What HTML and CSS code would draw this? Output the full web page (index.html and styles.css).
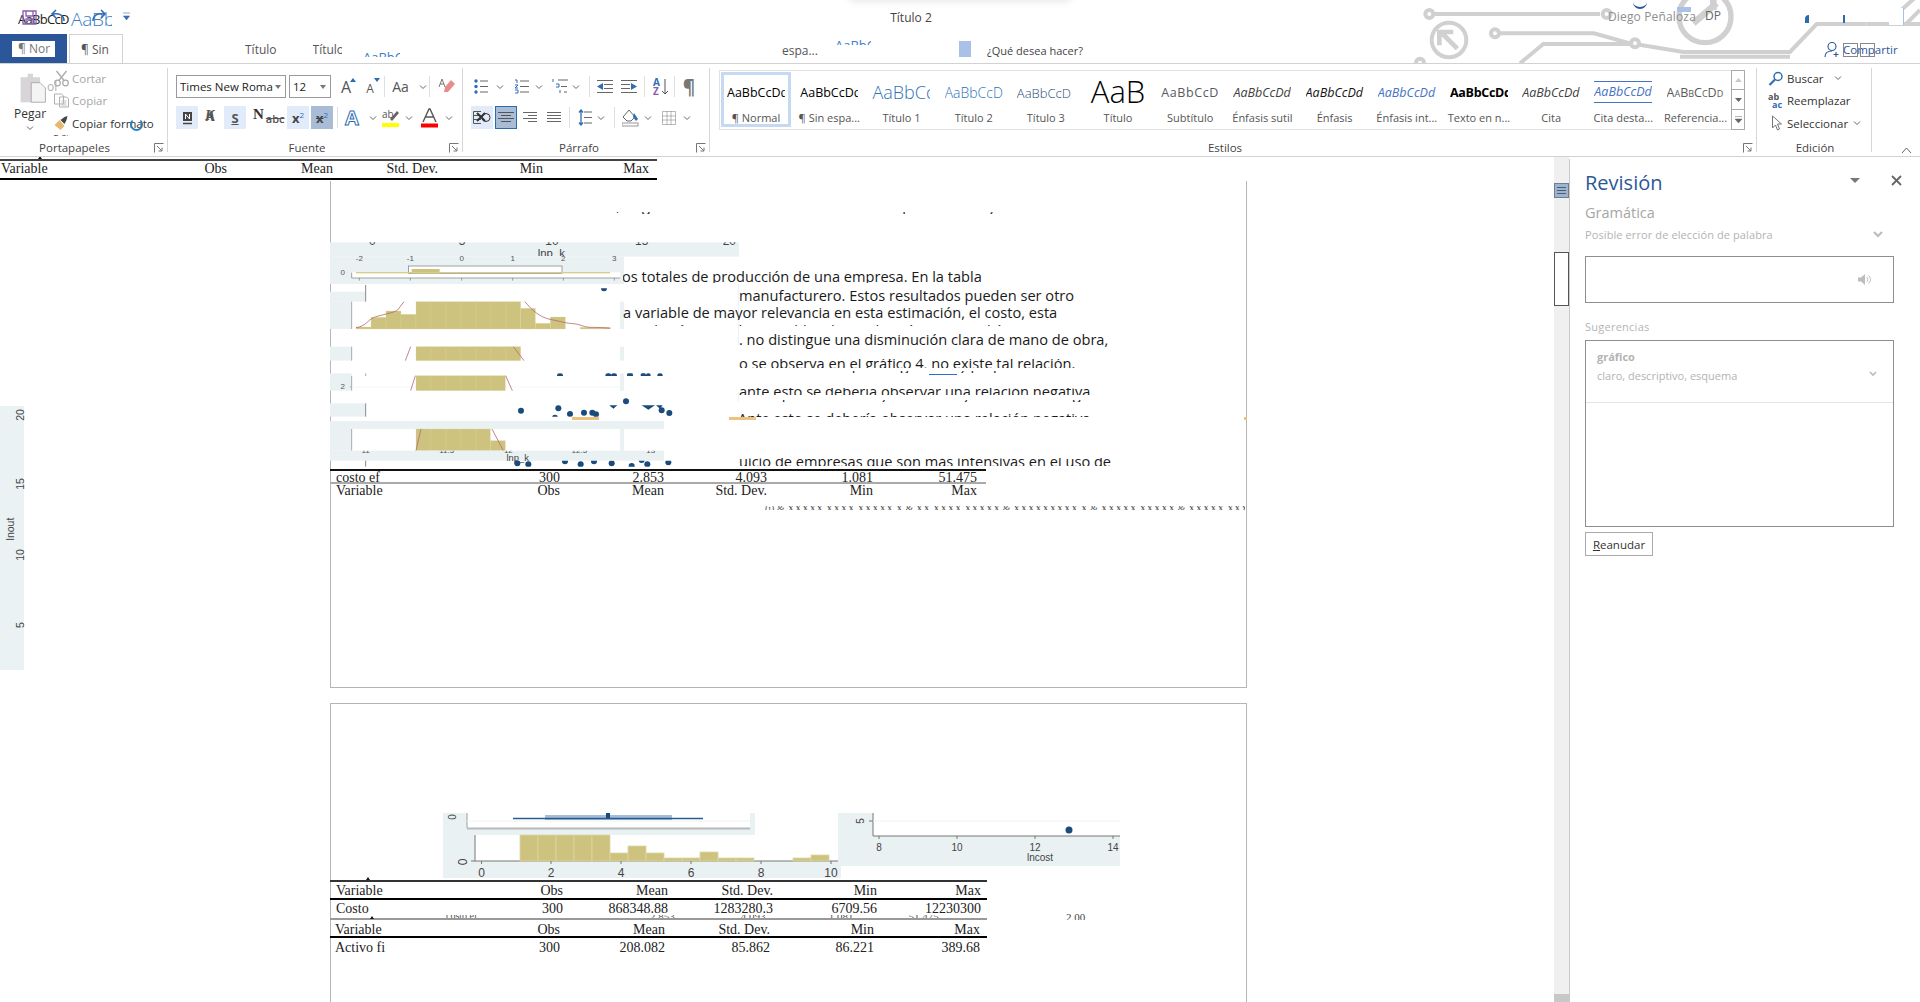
FILE: index.html
```html
<!DOCTYPE html>
<html lang="es">
<head>
<meta charset="utf-8">
<title>Word</title>
<link rel="stylesheet" href="styles.css">
</head>
<body>
<svg class="defs" width="0" height="0">
  <symbol id="chev" viewBox="0 0 8 6"><path d="M1 1.5l3 3 3-3" fill="none" stroke="#666" stroke-width="1"/></symbol>
  <symbol id="launch" viewBox="0 0 10 10"><path d="M.5 9.5V.5h9M3 3l5 5M8 4.5V8H4.5" fill="none" stroke="#777" stroke-width="1"/></symbol>
</svg>
<div class="app">
  <header class="head">
    <svg class="art" width="520" height="64" viewBox="0 0 1560 192">
      <g fill="none" stroke="#d0d0d0" stroke-width="12">
        <path d="M98 42H600"/><circle cx="88" cy="42" r="12"/><circle cx="620" cy="42" r="12"/>
        <circle cx="147" cy="120" r="52"/><path d="M128 102l44 44M118 136V96H160" stroke-width="14"/>
        <path d="M298 100H582L690 130"/><circle cx="285" cy="100" r="12"/><circle cx="705" cy="130" r="12"/>
        <path d="M360 190L430 132H690M718 134L850 156H1170L1250 72H1400"/>
        <circle cx="60" cy="188" r="12"/>
        <circle cx="915" cy="50" r="78" stroke-width="16"/><path d="M880 70L950 10M940 30V-10" stroke-width="20"/>
        <path d="M1400 72H1560M1470 60L1560 -20M1520 70L1560 30M840 170H1170"/>
      </g>
    </svg>
    <div class="peek"></div>
    <div class="titlebar">
      <div class="qat">
        <span class="ghost-a">AaBbCcD</span><span class="ghost-b">AaBbC</span>
        <svg class="save" width="15" height="15" viewBox="0 0 15 15"><path d="M1 1h13v13H1zM4 1v5h7V1M4 14V9h7v5" fill="none" stroke="#8a5cb0" stroke-width="1.3"/></svg>
        <svg class="undo" width="16" height="14" viewBox="0 0 16 14"><path d="M14 12C14 6 9 4 3 5M6 1L2 5l4 4" fill="none" stroke="#2f6db5" stroke-width="1.6"/></svg>
        <svg class="redo" width="16" height="14" viewBox="0 0 16 14"><path d="M2 12C2 6 7 4 13 5M10 1l4 4-4 4" fill="none" stroke="#2f6db5" stroke-width="1.6"/></svg>
        <svg class="more" width="7" height="9" viewBox="0 0 7 9"><path d="M0 1h7M.5 4h6L3.500 8z" fill="#3a6fb0" stroke="#3a6fb0" stroke-width=".6"/></svg>
      </div>
      <div class="doc-title">Título 2</div>
      <div class="account">
        <span class="acc-arc"></span><span class="acc-bar"></span>
        <span class="acc-name">Diego Peñaloza</span>
        <span class="acc-initials">DP</span>
        <span class="acc-frag a"></span><span class="acc-frag b"></span>
        <span class="acc-white"></span>
      </div>
    </div>
    <nav class="tabs">
      <div class="tab-blue"><span class="tab-white">¶ Nor</span></div>
      <div class="tab-active"><span class="tab-clip">¶ Sin espa</span></div>
      <span class="tabtext t1">Título</span>
      <span class="tabtext t2">Título</span>
      <span class="tabfrag f1"><span>AaBbCcD</span></span>
      <span class="tabtext t3">espa...</span>
      <span class="tabfrag f2"><span>AaBbCcD</span></span>
      <span class="blue-box"></span>
      <span class="tabtext t4">¿Qué desea hacer?</span>
      <div class="share">
        <svg width="18" height="17" viewBox="0 0 18 17"><path d="M9 1.500a4 4 0 0 1 0 8 4 4 0 0 1 0-8zM2 16c0-4 3-6 7-6M13 11v5M10.500 13.500h5" fill="none" stroke="#2b579a" stroke-width="1.100"/></svg>
        <span class="share-text">Compartir<i class="sq s1"></i><i class="sq s2"></i></span>
      </div>
    </nav>
  </header>

  <section class="ribbon">
    <div class="group g-clip">
      <div class="g-body clip-body">
        <div class="paste">
          <span class="ghost-ol">ol</span>
          <svg class="paste-ic" width="34" height="32" viewBox="0 0 34 36"><path d="M3 6h8V2h6v4h8v28H3z" fill="#d8d4d8"/><path d="M15 12h10l6 6v16H15z" fill="#f4f4f4" stroke="#a8a8a8"/></svg>
          <span class="paste-label">Pegar</span>
          <svg class="chev" width="8" height="6"><use href="#chev"/></svg>
        </div>
        <div class="cmds">
          <div class="cmd off"><svg width="16" height="17" viewBox="0 0 16 17"><path d="M3 1l8 10M13 1L5 11" stroke="#b0b0b0" stroke-width="1.500" fill="none"/><circle cx="4" cy="13" r="2.800" fill="none" stroke="#a8a8a8" stroke-width="1.200"/><circle cx="12" cy="13" r="2.800" fill="none" stroke="#a8a8a8" stroke-width="1.200"/></svg><span>Cortar</span></div>
          <div class="cmd off"><svg width="16" height="15" viewBox="0 0 16 15"><path d="M1 1h7l2 2v8H1zM6 4h7l2 2v8H6z" fill="#fff" stroke="#b0b0b0"/><path d="M8 8h5M8 10h5M8 12h5" stroke="#c0c0c0"/></svg><span>Copiar</span></div>
          <div class="cmd"><svg width="16" height="16" viewBox="0 0 16 16"><path d="M1 10l5-5 5 6-4 4z" fill="#e6b96e"/><path d="M7 5l4-3 3-1-1 4-2 4z" fill="#444"/></svg><span>Copiar formato</span><i class="ring"></i></div>
          <div class="frag sin"><span>¶ Sin</span></div>
        </div>
      </div>
      <div class="g-label">Portapapeles<svg class="launch" width="10" height="10"><use href="#launch"/></svg></div>
    </div>

    <div class="group g-font">
      <div class="g-body rows">
        <div class="row">
          <div class="combo w110"><span>Times New Roma</span><svg width="8" height="6"><path d="M1 1h6L4 5z" fill="#777"/></svg></div>
          <div class="combo w42"><span>12</span><svg width="8" height="6"><path d="M1 1h6L4 5z" fill="#777"/></svg></div>
          <i class="w3"></i>
          <div class="b w24"><span class="big-a">A</span><svg class="up" width="6" height="4"><path d="M0 4l3-4 3 4z" fill="#2b6cb0"/></svg></div>
          <div class="b w24"><span class="small-a">A</span><svg class="up" width="6" height="4"><path d="M0 0l3 4 3-4z" fill="#2b6cb0"/></svg></div>
          <i class="w2"></i><i class="sep"></i>
          <div class="b w31"><span class="aa">Aa</span></div>
          <div class="b w13"><svg width="8" height="6"><use href="#chev"/></svg></div>
          <i class="sep"></i>
          <div class="b w33"><svg width="18" height="18" viewBox="0 0 18 18"><path d="M7 9l6-7 4 4-7 8H6z" fill="#e88b8b"/><path d="M4 1L1 9M4 1l3 8M2 6h4" stroke="#777" fill="none"/></svg></div>
        </div>
        <div class="row">
          <div class="b w22 on"><svg width="11" height="14" viewBox="0 0 11 14"><path d="M1 1h9v9H1z" fill="#444"/><path d="M3.500 8V3l4 5V3" stroke="#fff" fill="none"/><path d="M1 12.500h9" stroke="#444" stroke-width="1.500"/></svg></div>
          <div class="b w26 k"><span class="k-a">K</span><span class="k-b">A</span></div>
          <div class="b w22 on"><span class="s-u">S</span></div>
          <div class="b w41 nabc"><span class="n">N</span><span class="abc">abc</span></div>
          <div class="b w22 on"><span class="xs">x</span><span class="sup">2</span></div>
          <i class="w2"></i>
          <div class="b w22 sel-lite"><span class="xs strike">x</span><span class="sup">2</span></div>
          <i class="w4"></i><i class="sep"></i>
          <div class="b w28"><span class="a-out">A</span></div>
          <div class="b w14"><svg width="8" height="6"><use href="#chev"/></svg></div>
          <div class="b w22"><svg width="18" height="20" viewBox="0 0 18 20"><text x="0" y="10" class="hl-t">ab</text><path d="M8 11L15 3l2 2-7 8z" fill="#666"/><rect y="15" width="17" height="4" fill="#ffff00"/></svg></div>
          <div class="b w14"><svg width="8" height="6"><use href="#chev"/></svg></div>
          <div class="b w26"><svg width="17" height="20" viewBox="0 0 17 20"><path d="M2 14L8 1h1l6 13M4.500 9h8" fill="none" stroke="#555" stroke-width="1.400"/><rect y="15.500" width="17" height="4" fill="#f00"/></svg></div>
          <div class="b w13"><svg width="8" height="6"><use href="#chev"/></svg></div>
        </div>
      </div>
      <div class="g-label">Fuente<svg class="launch" width="10" height="10"><use href="#launch"/></svg></div>
    </div>

    <div class="group g-para">
      <div class="g-body rows">
        <div class="row">
          <div class="b w24"><svg width="14" height="15" viewBox="0 0 14 15"><g stroke="#666"><path d="M6 2h8M6 7.500h8M6 13h8"/></g><g fill="#2f6db5"><circle cx="2" cy="2" r="1.700"/><circle cx="2" cy="7.500" r="1.700"/><circle cx="2" cy="13" r="1.700"/></g></svg></div>
          <div class="b w14"><svg width="8" height="6"><use href="#chev"/></svg></div><i class="w2"></i>
          <div class="b w24"><svg width="15" height="15" viewBox="0 0 15 15"><g stroke="#666"><path d="M6 2h9M6 7.500h9M6 13h9"/></g><g stroke="#2f6db5" fill="none"><path d="M1 1h2v3M1 6h3L1 9h3M1 11h3v3H1"/></g></svg></div>
          <div class="b w12"><svg width="8" height="6"><use href="#chev"/></svg></div><i class="w3"></i>
          <div class="b w24"><svg width="17" height="15" viewBox="0 0 17 15"><g stroke="#666"><path d="M6 1h10M9 7.500h6M12 13h3"/></g><g stroke="#2f6db5" fill="none"><path d="M1 0v3M4 5h3v3H4M8 11v3"/></g></svg></div>
          <div class="b w8"><svg width="8" height="6"><use href="#chev"/></svg></div><i class="w9"></i><i class="sep"></i><i class="w3"></i>
          <div class="b w24"><svg width="16" height="13" viewBox="0 0 16 13"><g stroke="#666"><path d="M0 .500h16M7 4.500h9M7 8.500h9M0 12.500h16"/></g><path d="M0 6.500L6 3v7z" fill="#2f6db5"/></svg></div>
          <div class="b w24"><svg width="16" height="13" viewBox="0 0 16 13"><g stroke="#666"><path d="M0 .500h16M0 4.500h9M0 8.500h9M0 12.500h16"/></g><path d="M16 6.500L10 3v7z" fill="#2f6db5"/></svg></div>
          <i class="w3"></i><i class="sep"></i><i class="w3"></i>
          <div class="b w24"><svg width="15" height="18" viewBox="0 0 15 18"><text x="0" y="8" class="az b1">A</text><text x="0" y="17" class="az b2">Z</text><path d="M12 1v15M9 13l3 3 3-3" fill="none" stroke="#555"/></svg></div>
          <i class="w2"></i><i class="sep"></i><i class="w2"></i>
          <div class="b w24"><span class="pilcrow">¶</span></div>
        </div>
        <div class="row">
          <i class="w2"></i>
          <div class="b w22 on"><svg width="18" height="13" viewBox="0 0 18 13"><path d="M.5.500H8M.5 4.500H8M.5 8.500H8M.5 12.500H8M.5.500v12" stroke="#555" fill="none"/><path d="M4 2l8 8M12 2l-8 8" stroke="#333" stroke-width="2"/><circle cx="13" cy="6.500" r="4" fill="none" stroke="#333"/></svg></div>
          <i class="w2"></i>
          <div class="b w22 sel"><svg width="16" height="11" viewBox="0 0 16 11"><path d="M0 .500h16M3 3.500h10M0 6.500h16M3 9.500h10" stroke="#555"/></svg></div>
          <i class="w2"></i>
          <div class="b w22"><svg width="14" height="11" viewBox="0 0 14 11"><path d="M0 .500h14M5 3.500h9M0 6.500h14M5 9.500h9" stroke="#666"/></svg></div>
          <i class="w2"></i>
          <div class="b w22"><svg width="14" height="11" viewBox="0 0 14 11"><path d="M0 .500h14M0 3.500h14M0 6.500h14M0 9.500h14" stroke="#666"/></svg></div>
          <i class="w4"></i><i class="sep"></i><i class="w3"></i>
          <div class="b w23"><svg width="14" height="17" viewBox="0 0 14 17"><path d="M6 3h8M6 8.500h8M6 14h8" stroke="#666"/><path d="M3 1v15M1 3.500L3 1l2 2.500M1 13.500L3 16l2-2.500" fill="none" stroke="#2f6db5" stroke-width="1.300"/></svg></div>
          <div class="b w10"><svg width="8" height="6"><use href="#chev"/></svg></div>
          <i class="w8"></i><i class="sep"></i><i class="w3"></i>
          <div class="b w24"><svg width="17" height="19" viewBox="0 0 17 19"><path d="M1 9l6-7 6 7-4 4H5z" fill="#fff" stroke="#666"/><path d="M12 5l4 6-2 2-3-4z" fill="#2f6db5"/><rect x="0" y="15" width="16" height="3" fill="#fff" stroke="#999"/></svg></div>
          <div class="b w12"><svg width="8" height="6"><use href="#chev"/></svg></div>
          <i class="w3"></i>
          <div class="b w23"><svg width="14" height="14" viewBox="0 0 14 14"><path d="M.500.500h13v13H.500zM5 .500v13M9 .500v13M.500 5h13M.500 9h13" fill="none" stroke="#777" stroke-dasharray="1 1"/></svg></div>
          <div class="b w14"><svg width="8" height="6"><use href="#chev"/></svg></div>
        </div>
      </div>
      <div class="g-label">Párrafo<svg class="launch" width="10" height="10"><use href="#launch"/></svg></div>
    </div>

    <div class="group g-styles">
      <div class="g-body">
        <div class="gallery">
          <div class="style picked"><span class="pv p-normal">AaBbCcDd</span><span class="st">¶ Normal</span></div>
          <div class="style"><span class="pv p-normal">AaBbCcDd</span><span class="st">¶ Sin espa...</span></div>
          <div class="style"><span class="pv p-h1">AaBbCc</span><span class="st">Título 1</span></div>
          <div class="style"><span class="pv p-h2">AaBbCcD</span><span class="st">Título 2</span></div>
          <div class="style"><span class="pv p-h3">AaBbCcD</span><span class="st">Título 3</span></div>
          <div class="style"><span class="pv p-title">AaB</span><span class="st">Título</span></div>
          <div class="style"><span class="pv p-sub">AaBbCcD</span><span class="st">Subtítulo</span></div>
          <div class="style"><span class="pv p-em1">AaBbCcDd</span><span class="st">Énfasis sutil</span></div>
          <div class="style"><span class="pv p-em2">AaBbCcDd</span><span class="st">Énfasis</span></div>
          <div class="style"><span class="pv p-em3">AaBbCcDd</span><span class="st">Énfasis int...</span></div>
          <div class="style"><span class="pv p-strong">AaBbCcDd</span><span class="st">Texto en n...</span></div>
          <div class="style"><span class="pv p-em1">AaBbCcDd</span><span class="st">Cita</span></div>
          <div class="style"><span class="pv p-quote">AaBbCcDd</span><span class="st">Cita desta...</span></div>
          <div class="style"><span class="pv p-ref">AaBbCcDd</span><span class="st">Referencia...</span></div>
          <div class="scroller">
            <div><svg width="7" height="4"><path d="M0 4l3.500-4L7 4z" fill="#c8c8c8"/></svg></div>
            <div><svg width="7" height="4"><path d="M0 0l3.500 4L7 0z" fill="#666"/></svg></div>
            <div><svg width="7" height="7"><path d="M0 .500h7M0 3l3.500 4L7 3z" fill="#666" stroke="#666" stroke-width=".5"/></svg></div>
          </div>
        </div>
      </div>
      <div class="g-label">Estilos<svg class="launch" width="10" height="10"><use href="#launch"/></svg></div>
    </div>

    <div class="group g-edit">
      <div class="g-body edit-body">
        <div class="cmd"><svg width="15" height="15" viewBox="0 0 15 15"><circle cx="9.500" cy="5.500" r="4" fill="none" stroke="#2f6db5" stroke-width="1.500"/><path d="M6.500 8.500L1 14" stroke="#2f6db5" stroke-width="2.200"/></svg><span>Buscar</span><svg class="trail" width="8" height="6"><use href="#chev"/></svg></div>
        <div class="cmd"><svg width="16" height="15" viewBox="0 0 16 15"><text x="0" y="7" class="abac">ab</text><text x="4" y="15" class="abac blue">ac</text></svg><span>Reemplazar</span></div>
        <div class="cmd"><svg width="15" height="16" viewBox="0 0 15 16"><path d="M4 1v12l3-3 2 5 2-1-2-5h4z" fill="#fff" stroke="#777"/></svg><span>Seleccionar</span><svg class="trail2" width="8" height="6"><use href="#chev"/></svg></div>
      </div>
      <div class="g-label">Edición</div>
    </div>
    <svg class="collapse" width="11" height="7" viewBox="0 0 11 7"><path d="M1 6l4.500-5L10 6" fill="none" stroke="#666"/></svg>
  </section>

  <main class="work">
    <div class="canvas">
      <div class="page p1"></div>
      <div class="page p2"></div>

      <div class="inout">
        <span class="iy y20">20</span><span class="iy y15">15</span><span class="iy y10">10</span><span class="iy y5">5</span><span class="iy ylab">lnout</span>
      </div>

      <svg class="chart" width="1570" height="845" viewBox="0 157 1570 845">
        <defs>
          <clipPath id="cA"><rect x="0" y="430" width="1300" height="8"/></clipPath>
          <clipPath id="cB"><rect x="0" y="503" width="1300" height="57"/></clipPath>
          <clipPath id="cC"><rect x="0" y="692" width="1300" height="18"/></clipPath>
          <clipPath id="cD"><rect x="0" y="175" width="1300" height="12"/></clipPath>
          <clipPath id="cE"><rect x="0" y="37" width="1300" height="10"/></clipPath>
          <clipPath id="cF"><rect x="0" y="40" width="1300" height="38"/></clipPath>
          <clipPath id="cG"><rect x="0" y="662" width="1300" height="10"/></clipPath>
        </defs>
        <g transform="translate(330 230) scale(.33333)">
          <rect x="0" y="37" width="1227" height="43" class="pale"/>
          <g class="tick-l" clip-path="url(#cE)">
            <text x="127" y="46">0</text><text x="396" y="46">5</text><text x="666" y="46">10</text><text x="935" y="46">15</text><text x="1198" y="46">20</text>
          </g>
          <rect x="0" y="80" width="882" height="82" class="pale"/>
          <text x="664" y="81" class="axis-big" clip-path="url(#cF)">lnp_k</text>
          <g class="tick-s"><text x="88" y="92">-2</text><text x="241" y="92">-1</text><text x="395" y="92">0</text><text x="548" y="92">1</text><text x="700" y="92">2</text><text x="853" y="92">3</text></g>
          <rect x="65" y="127" width="805" height="17" fill="#fff"/>
          <rect x="236" y="108" width="460" height="22" fill="#fff" stroke="#777" stroke-width="2"/>
          <rect x="245" y="117" width="84" height="14" fill="#cdc37f"/>
          <rect x="78" y="126" width="762" height="4" fill="#d6cc8c"/>
          <path d="M65 144H870M88 144v8M241 144v8M395 144v8M548 144v8M700 144v8M853 144v8M65 128v16" stroke="#777" stroke-width="2" fill="none"/>
          <text x="38" y="136" class="tick-s">0</text>

          <rect x="0" y="185" width="105" height="30" class="pale"/>
          <path d="M107 165V215" stroke="#888" stroke-width="3"/>
          <rect x="0" y="215" width="65" height="82" class="pale"/><rect x="870" y="215" width="12" height="82" class="pale"/>
          <path d="M65 215V297" stroke="#aaa" stroke-width="3"/>
          <g class="bars">
            <rect x="78" y="291" width="45" height="6"/><rect x="123" y="262" width="45" height="35"/><rect x="168" y="243" width="45" height="54"/><rect x="213" y="253" width="45" height="44"/>
            <rect x="258" y="215" width="45" height="82"/><rect x="303" y="215" width="45" height="82"/><rect x="348" y="215" width="45" height="82"/><rect x="393" y="215" width="45" height="82"/><rect x="438" y="215" width="45" height="82"/><rect x="483" y="215" width="45" height="82"/><rect x="528" y="215" width="44" height="82"/>
            <rect x="572" y="235" width="44" height="62"/><rect x="616" y="280" width="45" height="17"/><rect x="661" y="261" width="45" height="36"/><rect x="751" y="292" width="90" height="5"/>
          </g>
          <path d="M78 293C105 290 115 270 130 263S195 248 203 240L222 215M585 215C605 240 630 262 660 268S710 280 730 281 760 292 780 292 830 293 840 295" fill="none" stroke="#b66f72" stroke-width="2.500"/>

          <rect x="0" y="350" width="65" height="42" class="pale" /><rect x="870" y="350" width="12" height="42" class="pale"/>
          <path d="M65 350V392" stroke="#aaa" stroke-width="3"/>
          <g class="bars"><rect x="258" y="350" width="45" height="42"/><rect x="303" y="350" width="45" height="42"/><rect x="348" y="350" width="45" height="42"/><rect x="393" y="350" width="45" height="42"/><rect x="438" y="350" width="45" height="42"/><rect x="483" y="350" width="45" height="42"/><rect x="528" y="350" width="44" height="42"/></g>
          <path d="M242 350L226 392M550 350L582 392" fill="none" stroke="#b66f72" stroke-width="2.500"/>

          <rect x="0" y="430" width="65" height="52" class="pale"/><rect x="870" y="430" width="12" height="52" class="pale"/>
          <path d="M65 438V482M107 430v8M60 471h5" stroke="#999" stroke-width="2.500"/>
          <text x="38" y="476" class="tick-s">2</text>
          <path d="M65 471H870" stroke="#eef3f3" stroke-width="2"/>
          <g class="bars"><rect x="258" y="437" width="45" height="45"/><rect x="303" y="437" width="45" height="45"/><rect x="348" y="437" width="45" height="45"/><rect x="393" y="437" width="45" height="45"/><rect x="438" y="437" width="45" height="45"/><rect x="483" y="437" width="43" height="45"/></g>
          <path d="M256 437L242 482M527 437L547 482" fill="none" stroke="#b66f72" stroke-width="2.500"/>
          <g class="dot" clip-path="url(#cA)"><circle cx="690" cy="438" r="9"/><circle cx="835" cy="438" r="9"/><circle cx="852" cy="438" r="9"/><circle cx="900" cy="436" r="9"/><circle cx="940" cy="436" r="8"/><circle cx="955" cy="436" r="7"/><circle cx="990" cy="437" r="8"/></g>

          <rect x="0" y="520" width="105" height="40" class="pale"/>
          <path d="M107 520V560" stroke="#888" stroke-width="3"/>
          <g class="dot" clip-path="url(#cB)"><circle cx="573" cy="542" r="9"/><circle cx="685" cy="535" r="9"/><circle cx="720" cy="552" r="9"/><circle cx="762" cy="548" r="9"/><circle cx="787" cy="548" r="9"/><circle cx="798" cy="553" r="9"/><circle cx="888" cy="514" r="9"/><circle cx="995" cy="541" r="9"/><circle cx="1018" cy="549" r="9"/><circle cx="675" cy="563" r="9"/></g>
          <g class="dot"><path d="M838 526h24l-12 10zM935 526h40l-20 13zM978 526h20l-8 10z"/></g>

          <rect x="0" y="573" width="1002" height="24" class="pale"/>
          <rect x="0" y="597" width="65" height="65" class="pale"/><rect x="870" y="597" width="12" height="65" class="pale"/>
          <path d="M65 597V662" stroke="#aaa" stroke-width="3"/>
          <g class="bars"><rect x="258" y="597" width="45" height="65"/><rect x="303" y="597" width="45" height="65"/><rect x="348" y="597" width="45" height="65"/><rect x="393" y="597" width="45" height="65"/><rect x="438" y="597" width="43" height="65"/><rect x="481" y="632" width="45" height="30"/></g>
          <path d="M273 597L258 662M486 597L520 662" fill="none" stroke="#b66f72" stroke-width="2.500"/>
          <rect x="0" y="662" width="1002" height="30" class="pale"/>
          <text x="563" y="692" class="axis-s">lnp_k</text>
          <g class="tick-s" clip-path="url(#cG)"><text x="107" y="670">11</text><text x="350" y="670">11.5</text><text x="535" y="670">12</text><text x="748" y="670">12.5</text><text x="962" y="670">13</text></g>
          <path d="M107 692V710" stroke="#888" stroke-width="3"/>
          <g class="dot" clip-path="url(#cC)"><circle cx="562" cy="700" r="9"/><circle cx="595" cy="703" r="9"/><circle cx="705" cy="694" r="9"/><circle cx="752" cy="703" r="9"/><circle cx="792" cy="694" r="9"/><circle cx="845" cy="700" r="9"/><circle cx="905" cy="708" r="9"/><circle cx="935" cy="690" r="9"/><circle cx="952" cy="703" r="9"/><circle cx="1015" cy="697" r="9"/></g>
          <g class="dot" clip-path="url(#cD)"><circle cx="822" cy="175" r="9"/></g>
          <path d="M1225 345V162M1225 515v-30" stroke="#eaf1f3" stroke-width="3"/>
        </g>

        <rect x="443" y="813" width="312" height="22" class="pale"/>
        <rect x="467" y="813" width="283" height="15" fill="#fff"/>
        <path d="M467 813v15" stroke="#bbb" stroke-width="1.500"/>
        <path d="M467 828.500h283" stroke="#b5b9bc" stroke-width="2"/>
        <path d="M467 821h283" stroke="#eef3f3"/>
        <rect x="545" y="815" width="127" height="5" fill="#a8bcd6"/>
        <path d="M513 818.500H703" stroke="#2a5c94" stroke-width="1.600"/>
        <rect x="606" y="813" width="4" height="5" fill="#1a4b7c"/>
        <text x="459" y="820" class="t10" transform="rotate(-90 456 820)">0</text>

        <rect x="443" y="835" width="398" height="43" class="pale"/>
        <rect x="475" y="835" width="366" height="26" fill="#fff"/>
        <path d="M475 835v26h366" fill="none" stroke="#777"/>
        <g class="bars">
          <rect x="520" y="835" width="18" height="26"/><rect x="538" y="835" width="18" height="26"/><rect x="556" y="835" width="18" height="26"/><rect x="574" y="835" width="18" height="26"/><rect x="592" y="835" width="18" height="26"/>
          <rect x="610" y="853" width="18" height="8"/><rect x="628" y="846" width="18" height="15"/><rect x="646" y="853" width="18" height="8"/><rect x="664" y="858" width="18" height="3"/><rect x="682" y="858" width="18" height="3"/><rect x="700" y="852" width="18" height="9"/><rect x="718" y="858" width="18" height="3"/><rect x="736" y="858" width="18" height="3"/><rect x="793" y="858" width="18" height="3"/><rect x="811" y="855" width="18" height="6"/>
        </g>
        <g class="t12"><text x="481.500" y="877">0</text><text x="551" y="877">2</text><text x="621" y="877">4</text><text x="691" y="877">6</text><text x="761" y="877">8</text><text x="831" y="877">10</text></g>
        <path d="M481.500 861v3M551 861v3M621 861v3M691 861v3M761 861v3M831 861v3M471 861h4" stroke="#777"/>
        <text x="463" y="866" class="t12" transform="rotate(-90 463 862)">0</text>

        <rect x="838" y="813" width="282" height="53" class="pale"/>
        <rect x="873" y="813" width="247" height="23" fill="#fff"/>
        <path d="M873 813v23h247" fill="none" stroke="#777"/>
        <path d="M873 821h247" stroke="#eef3f3"/>
        <circle cx="1069" cy="830" r="3.500" fill="#1a4b7c"/>
        <g class="t10"><text x="879" y="851">8</text><text x="957" y="851">10</text><text x="1035" y="851">12</text><text x="1113" y="851">14</text><text x="1040" y="861">lncost</text></g>
        <path d="M879 836v3M957 836v3M1035 836v3M1113 836v3M869 821h4" stroke="#777"/>
        <text x="860" y="825" class="t10" transform="rotate(-90 860 821)">5</text>
      </svg>

      <div class="frag l0"><span>en la literatura de los costos, el gráfico nos muestra los factores de producción y</span></div>
      <div class="frag l1"><span>os totales de producción de una empresa. En la tabla</span></div>
      <div class="frag l2"><span>manufacturero. Estos resultados pueden ser otro</span></div>
      <div class="frag l3"><span>a variable de mayor relevancia en esta estimación, el costo, esta</span></div>
      <div class="frag l3b"><span>relación entre las variables de producción. Esto podría ser</span></div>
      <div class="frag l4"><span>. no distingue una disminución clara de mano de obra,</span></div>
      <div class="frag l5"><span>o se observa en el gráfico 4, no existe tal relación.</span></div>
      <div class="frag l5b"><span>empresas grandes y pequeñas que no se distinguen bien.</span></div>
      <div class="frag l6"><span>ante esto se debería observar una relación negativa</span></div>
      <div class="frag l6b"><span>empresas con mayor tamaño y menor uso de gráficos de relación</span></div>
      <div class="frag l7"><span>Ante esto se debería observar una relación negativa</span></div>
      <div class="frag l8"><span>uicio de empresas que son más intensivas en el uso de</span></div>
      <i class="mark m1"></i><i class="mark m2"></i><i class="mark m3"></i><i class="squiggle"></i>

      <div class="frag tiny"><span>(i) &amp; XXXXX XXXX XXXXX X &amp; XX XXXX XXXXX &amp; XXXXXXXXX X &amp; XXXXX XXXXX &amp; XXXXX XXX XX / XX XXXX</span></div>

      <div class="stat s-top">
        <div class="tr head-row"><span class="lab">Variable</span><span>Obs</span><span>Mean</span><span>Std. Dev.</span><span>Min</span><span>Max</span></div>
      </div>

      <div class="stat s-mid">
        <div class="tr clip-row"><span class="lab">costo ef</span><span>300</span><span>2.853</span><span>4.093</span><span>1.081</span><span>51.475</span></div>
        <div class="tr clip-row2"><span class="lab">Variable</span><span>Obs</span><span>Mean</span><span>Std. Dev.</span><span>Min</span><span>Max</span></div>
      </div>

      <div class="stat s-low">
        <div class="tr head-row"><span class="lab">Variable</span><span>Obs</span><span>Mean</span><span>Std. Dev.</span><span>Min</span><span>Max</span></div>
        <div class="tr body-row"><span class="lab">Costo</span><span>300</span><span>868348.88</span><span>1283280.3</span><span>6709.56</span><span>12230300</span></div>
      </div>
      <div class="stat s-low2">
        <div class="tr head-row"><span class="lab">Variable</span><span>Obs</span><span>Mean</span><span>Std. Dev.</span><span>Min</span><span>Max</span></div>
        <div class="tr body-row"><span class="lab">Activo fi</span><span>300</span><span>208.082</span><span>85.862</span><span>86.221</span><span>389.68</span></div>
      </div>
      <div class="frag under"><span>costo ef</span></div>
      <div class="frag under2"><span>2.853 &nbsp;&nbsp;&nbsp;&nbsp;&nbsp;&nbsp;&nbsp;&nbsp;&nbsp;&nbsp;&nbsp;&nbsp;&nbsp;&nbsp;&nbsp;&nbsp;&nbsp;&nbsp;&nbsp;&nbsp;&nbsp;&nbsp; 4.093 &nbsp;&nbsp;&nbsp;&nbsp;&nbsp;&nbsp;&nbsp;&nbsp;&nbsp;&nbsp;&nbsp;&nbsp;&nbsp;&nbsp;&nbsp;&nbsp;&nbsp;&nbsp;&nbsp;&nbsp;&nbsp; 1.081 &nbsp;&nbsp;&nbsp;&nbsp;&nbsp;&nbsp;&nbsp;&nbsp;&nbsp;&nbsp;&nbsp;&nbsp;&nbsp;&nbsp;&nbsp;&nbsp;&nbsp;&nbsp; 51.475</span></div>
      <div class="frag under3"><span>2.00</span></div>
      <i class="tri t-a"></i><i class="tri t-b"></i><i class="tri t-c"></i>
    </div>

    <div class="vbar">
      <div class="vmark"><i></i><i></i><i></i></div>
      <div class="vthumb"></div>
      <div class="vend"></div>
    </div>

    <aside class="pane">
      <div class="pane-head">
        <h1>Revisión</h1>
        <svg class="p-tri" width="10" height="6" viewBox="0 0 10 6"><path d="M0 0h10L5 5z" fill="#777"/></svg>
        <svg class="p-x" width="11" height="11" viewBox="0 0 11 11"><path d="M1 1l9 9M10 1l-9 9" stroke="#666" stroke-width="1.800"/></svg>
      </div>
      <div class="gram">Gramática</div>
      <div class="gram-sub"><span>Posible error de elección de palabra</span><svg width="10" height="7" viewBox="0 0 10 7"><path d="M1 1l4 4 4-4" fill="none" stroke="#bbb" stroke-width="2"/></svg></div>
      <div class="box ctx">
        <svg width="13" height="11" viewBox="0 0 13 11"><path d="M0 3.500h3L7 0v11L3 7.500H0z" fill="#bdbdbd"/><path d="M8.500 3a3 3 0 0 1 0 5M10.500 1.500a5 5 0 0 1 0 8" fill="none" stroke="#bdbdbd"/></svg>
      </div>
      <div class="sug">Sugerencias</div>
      <div class="box sugbox">
        <div class="sug-row">
          <div><b>gráfico</b><p>claro, descriptivo, esquema</p></div>
          <svg width="8" height="6" viewBox="0 0 8 6"><path d="M1 1l3 3 3-3" fill="none" stroke="#bbb" stroke-width="1.600"/></svg>
        </div>
      </div>
      <button class="resume"><u>R</u>eanudar</button>
    </aside>
  </main>
</div>
</body>
</html>
```

FILE: styles.css
```css
*{box-sizing:border-box}
html,body{margin:0;padding:0;background:#fff;overflow:hidden}
body{width:1920px;height:1002px;font-family:"Open Sans","Noto Sans",sans-serif;color:#444}
.defs{position:absolute}
i{display:block;font-style:normal}
.app{width:1920px;height:1002px;display:flex;flex-direction:column;overflow:hidden}

/* header */
.head{position:relative;height:64px;flex:none;border-bottom:1px solid #d2d2d2;overflow:hidden}
.art{position:absolute;left:1400px;top:0}
.peek{position:absolute;left:850px;top:-6px;width:220px;height:6px;box-shadow:0 0 8px rgba(0,0,0,.15)}
.titlebar{position:relative;height:34px;display:flex;justify-content:center;align-items:center;padding-right:98px}
.doc-title{font-size:12px;color:#444}
.qat{position:absolute;left:0;top:0;width:140px;height:34px}
.ghost-a{position:absolute;left:18px;top:10px;font-size:13px;color:#222;letter-spacing:-.7px;white-space:nowrap;width:52px;overflow:hidden}
.ghost-b{position:absolute;left:71px;top:6px;font-size:19px;font-weight:300;color:#3b7cc4;width:41px;overflow:hidden;white-space:nowrap;letter-spacing:-.2px}
.save{position:absolute;left:22px;top:10px}
.undo{position:absolute;left:50px;top:9px}
.redo{position:absolute;left:91px;top:9px}
.more{position:absolute;left:123px;top:12px}
.account{position:absolute;inset:0}
.acc-name{position:absolute;left:1608px;top:8px;font-size:12px;color:#8e8e8e;white-space:nowrap;letter-spacing:.15px}
.acc-initials{position:absolute;left:1705px;top:7px;font-size:12px;color:#666}
.acc-arc{position:absolute;left:1633px;top:2px;width:14px;height:7px;border-bottom:2px solid #2b579a;border-radius:0 0 8px 8px}
.acc-bar{position:absolute;left:1677px;top:7px;width:14px;height:5px;background:#a9c1e6}
.acc-frag{position:absolute;background:#2b6cb0}
.acc-frag.a{left:1805px;top:15px;width:4px;height:8px;border-radius:4px 0 0 0}
.acc-frag.b{left:1843px;top:15px;width:2px;height:8px}
.acc-white{position:absolute;left:1889px;top:8px;width:15px;height:17px;background:#fff;border-right:1px solid #a9c1e6}
.tabs{position:relative;height:29px;display:flex;align-items:center;font-size:12px;line-height:16px}
.tab-blue{width:67px;height:29px;background:#2b579a;flex:none;display:flex;align-items:center;padding-left:12px}
.tab-white{width:43px;height:16px;background:#fff;color:#777;font-size:12px;line-height:16px;padding-left:6px;overflow:hidden;white-space:nowrap}
.tab-active{width:54px;height:30px;margin-left:2px;border:1px solid #d2d2d2;border-bottom:1px solid #fff;background:#fff;padding-left:11px;flex:none;line-height:29px;margin-top:1px;position:relative;z-index:1}
.tab-clip{display:block;width:31px;overflow:hidden;white-space:nowrap;color:#555}
.tabtext{flex:none;color:#555;white-space:nowrap;margin-top:2px}
.t1{margin-left:122px}
.t2{margin-left:36px;width:29px;overflow:hidden}
.tabfrag{position:absolute;overflow:hidden;height:5px;color:#3b7cc4;font-size:13px;line-height:13px}
.tabfrag span{display:block;margin-top:-1px;white-space:nowrap}
.f1{left:363px;top:18px;width:37px}
.f2{left:835px;top:6px;width:36px}
.t3{position:absolute;left:782px;top:7px}
.blue-box{position:absolute;left:959px;top:7px;width:12px;height:16px;background:#a9c1e6}
.t4{position:absolute;left:987px;top:7px;color:#444;font-size:11px}
.share{position:absolute;left:1823px;top:7px;display:flex;align-items:center;gap:1px}
.share-text{position:relative;font-size:11.500px;color:#2b579a;margin-left:1px}
.sq{position:absolute;top:1px;width:15px;height:14px;border:1px solid #888}
.sq.s1{left:0}
.sq.s2{left:17px}

/* ribbon */
.ribbon{position:relative;height:93px;flex:none;display:flex;align-items:flex-start;border-bottom:1px solid #d2d2d2;font-size:12px;color:#444}
.group{position:relative;height:84px;margin-top:4px;flex:none;display:flex;flex-direction:column;border-right:1px solid #d6d6d6}
.g-body{flex:1;min-height:0}
.g-label{height:15px;line-height:13px;text-align:center;font-size:11.500px;color:#444;position:relative;margin-bottom:-4px}
.launch{position:absolute;right:3px;top:2px}
.g-clip{width:168px}
.g-clip .g-label{padding-right:18px}
.g-font{width:295px;padding-left:8px}
.g-font .g-label{padding-right:24px}
.g-para{width:247px;padding-left:6px}
.g-para .g-label{padding-right:20px}
.g-styles{width:1047px;padding-left:9px}
.g-styles .g-label{padding-right:25px}
.g-edit{width:115px;padding-left:11px}
.g-edit .g-label{padding-right:9px}
.collapse{position:absolute;left:1901px;top:83px}
.clip-body{display:flex;padding-left:16px}
.paste{position:relative;width:36px;display:flex;flex-direction:column;align-items:flex-start;padding-top:4px}
.ghost-ol{position:absolute;left:31px;top:10px;color:#b0b0b0;font-size:12px}
.paste-label{margin-top:2px;margin-left:-2px;line-height:16px;color:#333}
.paste .chev{margin:3px 0 0 10px}
.cmds{margin-left:1px;display:flex;flex-direction:column;margin-top:-1px;position:relative}
.cmd{height:22.500px;display:flex;align-items:center;position:relative;white-space:nowrap;color:#333;font-size:11.500px}
.cmd svg:first-child{width:17px;flex:none;margin-right:2px}
.cmd.off{color:#a6a6a6}
.ring{position:absolute;left:77px;top:6px;width:13px;height:13px;border:2px solid #2b7cc0;border-top-color:transparent;border-radius:50%}
.frag.sin{left:0;top:67px;width:18px;height:2px;font-size:9px;line-height:10px;color:#555}
.rows{display:flex;flex-direction:column;gap:8px;padding-top:7px}
.row{display:flex;height:23px;align-items:stretch}
.combo{display:flex;align-items:center;justify-content:space-between;border:1px solid #9a9a9a;padding:0 3px;white-space:nowrap;overflow:hidden;color:#222;flex:none}
.combo span{overflow:hidden;font-size:11.500px}
.w110{width:110px}
.w42{width:42px;margin-left:3px}
.w2{width:2px;flex:none}.w3{width:3px;flex:none}.w4{width:4px;flex:none}.w5{width:5px;flex:none}.w8{width:8px;flex:none}.w9{width:9px;flex:none}.w10{width:10px;flex:none}.w12{width:12px;flex:none}.w13{width:13px;flex:none}.w14{width:14px;flex:none}.w22{width:22px;flex:none}.w23{width:23px;flex:none}.w24{width:24px;flex:none}.w26{width:26px;flex:none}.w28{width:28px;flex:none}.w31{width:31px;flex:none}.w33{width:33px;flex:none}.w41{width:41px;flex:none}
.b{display:flex;align-items:center;justify-content:center;position:relative;color:#555}
.on{background:#e1ebf9}
.sel{background:#a8bcd6;border:1px solid #2b6cb0}
.sel-lite{background:#a8bcd6}
.sep{width:1px;flex:none;background:#e0e0e0;margin:1px 0}
.big-a{font-size:16px;color:#555}
.small-a{font-size:12px;color:#555;margin-top:3px}
.up{position:absolute;left:16px;top:3px}
.aa{font-size:14px;color:#555}
.k{font-family:"Liberation Serif",serif;font-style:italic;font-weight:bold;color:#555;font-size:14px}
.k-a{position:absolute;left:7px;top:2px}
.k-b{position:absolute;left:8px;top:3px}
.s-u{font-size:13px;font-weight:700;text-decoration:underline;color:#555}
.nabc{justify-content:flex-start}
.n{font-family:"Liberation Serif",serif;font-weight:700;font-size:15px;color:#333;margin-left:7px;margin-top:-6px}
.abc{font-size:11px;font-weight:600;text-decoration:line-through;color:#555;margin-left:2px;margin-top:2px}
.xs{font-size:13px;font-weight:700;color:#444}
.strike{text-decoration:line-through}
.sup{font-size:8px;color:#2f6db5;margin-top:-6px}
.a-out{font-size:20px;font-weight:700;color:#fff;-webkit-text-stroke:1px #2f6db5}
.hl-t{font-size:10px;fill:#555}
.az{font-size:10px;font-weight:700}
.az.b1{fill:#2f6db5}
.az.b2{fill:#8a5cb0}
.pilcrow{font-size:19px;font-weight:700;color:#777}

/* gallery */
.gallery{position:relative;margin-top:2px;width:1026px;height:60px;border:1px solid #e2e2e2;display:flex;padding:1px 0 0 1px}
.style{width:72.2px;height:55px;flex:none;display:flex;flex-direction:column;align-items:center;position:relative;overflow:hidden}
.style.picked{border:3px solid #c5d9f3;width:70px;margin-right:2.2px}
.pv{display:block;height:32px;line-height:42px;width:58px;overflow:hidden;white-space:nowrap;text-align:left;color:#000;font-size:12.500px}
.picked .pv{height:29px;line-height:36px}
.st{position:absolute;top:38px;font-size:11px;color:#555;white-space:nowrap}
.picked .st{top:35px}
.p-h1{font-size:18px;color:#2e74b5;font-weight:300;line-height:40px}
.p-h2{font-size:14px;color:#2e74b5;font-weight:300}
.p-h3{font-size:13px;color:#1f4d78;font-weight:300}
.p-title{font-size:31px;font-weight:300;line-height:24px;height:24px;margin-top:7px;text-align:center;width:58px}
.p-sub{color:#5a5a5a;letter-spacing:.6px}
.p-em1{font-style:italic;color:#404040}
.p-em2{font-style:italic;color:#111}
.p-em3{font-style:italic;color:#4472c4}
.p-strong{font-weight:700;letter-spacing:-.3px}
.p-quote{font-style:italic;color:#4472c4;border-top:1px solid #4472c4;border-bottom:1px solid #4472c4;height:22px;line-height:20px;margin-top:9px;margin-bottom:1px}
.p-ref{font-variant:small-caps;color:#5a5a5a}
.scroller{position:absolute;right:-1px;top:-1px;width:14px;height:60px;border:1px solid #aaa;display:flex;flex-direction:column;background:#fff}
.scroller div{height:20px;display:flex;align-items:center;justify-content:center;border-bottom:1px solid #aaa}
.scroller div:last-child{border:0}
.edit-body{margin-top:-1px}
.edit-body .cmd svg:first-child{width:16px;margin-right:3px}
.trail{margin-left:10px}
.trail2{margin-left:5px}
.abac{font-size:9px;font-weight:700;fill:#555}
.abac.blue{fill:#2f6db5}

/* document area */
.work{flex:1;min-height:0;display:flex;position:relative}
.canvas{position:relative;width:1554px;flex:none;overflow:hidden}
.page{position:absolute;left:330px;width:917px;border:1px solid #b5b5b5}
.p1{top:24px;height:507px;border-top:0}
.p2{top:546px;height:320px;border-bottom:0}
.inout{position:absolute;left:0;top:249px;width:24px;height:264px;background:#eaf2f3}
.iy{position:absolute;font:10.500px "Liberation Sans",sans-serif;color:#444;transform:rotate(-90deg);white-space:nowrap;line-height:12px}
.y20{left:14px;top:3px}
.y15{left:14px;top:72px}
.y10{left:14px;top:143px}
.y5{left:17px;top:213px}
.ylab{left:-1px;top:117px}
.chart{position:absolute;left:0;top:0}
.pale{fill:#eaf1f3}
.bars rect{fill:#cdc37f;stroke:#dcd6a4;stroke-width:.8}
.dot{fill:#1a4b7c}
.tick-l{font:36px "Liberation Sans",sans-serif;fill:#444;text-anchor:middle}
.tick-s{font:24px "Liberation Sans",sans-serif;fill:#555;text-anchor:middle}
.axis-big{font:34px "Liberation Sans",sans-serif;fill:#444;text-anchor:middle}
.axis-s{font:28px "Liberation Sans",sans-serif;fill:#444;text-anchor:middle}
.t10{font:10px "Liberation Sans",sans-serif;fill:#444;text-anchor:middle}
.t12{font:12px "Liberation Sans",sans-serif;fill:#444;text-anchor:middle}

/* clipped text lines */
.frag{position:absolute;overflow:hidden;font-family:"Open Sans",sans-serif;font-size:14.600px;line-height:20px;color:#1a1a1a;white-space:nowrap}
.frag span{display:block}
.l0{left:410px;top:55px;width:760px;height:2px;letter-spacing:.5px}
.l0 span{margin-top:-17px}
.l1{left:623px;top:114px;width:370px;height:12px}
.l1 span{margin-top:-5px;margin-left:-1px}
.l2{left:739px;top:128px;width:340px;height:20px}
.l3{left:623px;top:150px;width:440px;height:13px}
.l3 span{margin-top:-5px}
.l3b{left:640px;top:166px;width:400px;height:3px}
.l3b span{margin-top:-3px}
.l4{left:739px;top:172px;width:375px;height:20px}
.l5{left:739px;top:202px;width:340px;height:9px}
.l5 span{margin-top:-6px}
.l5b{left:830px;top:214px;width:200px;height:2px}
.l5b span{margin-top:-17px}
.l6{left:739px;top:231px;width:360px;height:7px}
.l6 span{margin-top:-7px}
.l6b{left:760px;top:243px;width:330px;height:2px}
.l6b span{margin-top:-17px}
.l7{left:738px;top:256px;width:360px;height:4px}
.l7 span{margin-top:-5px}
.l8{left:739px;top:301px;width:380px;height:8px}
.l8 span{margin-top:-7px}
.mark{position:absolute;top:260px;height:3px;background:#ecc27e}
.m1{left:572px;width:27px}
.m2{left:729px;width:27px}
.m3{left:1244px;width:3px}
.squiggle{position:absolute;left:929px;top:217px;width:28px;height:1px;background:#2b6cd0}
.tiny{left:765px;top:349px;width:480px;height:4px;font-family:"Liberation Serif",serif;font-size:10px;line-height:10px;color:#555}
.tiny span{margin-top:-2px}

/* stat tables */
.stat{position:absolute;font-family:"Liberation Serif",serif;font-size:14px;color:#222}
.tr{display:grid;grid-template-columns:187px 40px 105px 105px 104px 104px;height:18px;line-height:18px;text-align:right;white-space:nowrap}
.lab{text-align:left}
.s-top{left:0;top:2px;width:657px;border-top:2px solid #444}
.s-top .tr{grid-template-columns:185px 41px 106px 105px 105px 106px;padding-left:1px}
.s-top .head-row{border-bottom:2px solid #000;height:19px;line-height:15px}
.s-mid{left:330px;top:312px;width:656px;border-top:2px solid #111;height:26px;overflow:hidden}
.s-mid .tr{padding-left:6px;grid-template-columns:184px 40px 104px 103px 106px 104px}
.clip-row{height:13px;border-bottom:2px solid #aaa;line-height:14px;overflow:hidden}
.clip-row2{height:11px;line-height:14px}
.s-low{left:330px;top:723px;width:657px;border-top:2px solid #333}
.s-low .tr{padding-left:6px}
.s-low .head-row{height:18px;border-bottom:2px solid #000;line-height:17px}
.s-low .body-row{height:20px;line-height:18px;border-bottom:2px solid #999}
.s-low2{left:330px;top:763px;width:657px}
.s-low2 .tr{padding-left:5px;grid-template-columns:185px 40px 105px 105px 104px 106px}
.s-low2 .head-row{height:18px;border-bottom:2px solid #000;line-height:19px}
.s-low2 .body-row{height:20px;line-height:20px}
.under{left:446px;top:758px;width:46px;height:3px;font:10px "Liberation Serif",serif;color:#555}
.under span{margin-top:-5px}
.under2{left:650px;top:758px;width:330px;height:3px;font:11px "Liberation Serif",serif;color:#555;line-height:12px}
.under2 span{margin-top:-5px}
.under3{left:1066px;top:757px;width:26px;height:6px;font:11px "Liberation Serif",serif;color:#444;line-height:12px}
.under3 span{margin-top:-3px}
.tri{position:absolute;width:0;height:0;border-left:2px solid transparent;border-right:2px solid transparent;border-bottom:3px solid #111}
.t-a{left:38px;top:-1px}
.t-b{left:366px;top:720px}
.t-c{left:370px;top:759px}

/* scrollbar + pane */
.vbar{position:relative;width:15px;flex:none;background:#f0f0f0}
.vmark{position:absolute;left:0;top:26px;width:15px;height:15px;background:#9db4cf;border:1px solid #6f7f93;display:flex;flex-direction:column;justify-content:center;gap:2px;padding:0 2px}
.vmark i{height:1px;background:#4d5c70}
.vthumb{position:absolute;left:0;top:95px;width:15px;height:54px;background:#fff;border:1px solid #555}
.vend{position:absolute;left:0;bottom:0;width:15px;height:8px;background:#c8c8c8}
.pane{width:351px;flex:none;border-left:1px solid #c8c8c8;margin-top:2px;padding:0 15px}
.pane-head{position:relative;height:42px;padding-top:10px}
.pane-head h1{margin:0;font-size:20px;line-height:28px;font-weight:400;color:#2b579a}
.p-tri{position:absolute;left:265px;top:19px}
.p-x{position:absolute;left:306px;top:16px}
.gram{font-size:14.500px;line-height:22px;color:#a6a6a6;margin-top:1px}
.gram-sub{display:flex;align-items:center;justify-content:space-between;width:298px;font-size:11px;color:#b3b3b3;letter-spacing:.1px;height:20px}
.box{border:1px solid #8e8e8e;width:309px}
.ctx{height:47px;margin-top:12px;display:flex;align-items:center;justify-content:flex-end;padding-right:22px}
.sug{font-size:11px;line-height:14px;color:#b5b5b5;margin-top:17px;letter-spacing:.25px}
.sugbox{height:187px;margin-top:6px}
.sug-row{height:62px;border-bottom:1px solid #e4e4e4;display:flex;justify-content:space-between;align-items:flex-start;padding:8px 16px 0 11px;color:#b3b3b3;font-size:11px}
.sug-row svg{margin-top:22px}
.sug-row b{font-weight:700;display:block;line-height:16px}
.sug-row p{margin:2px 0 0;line-height:18px}
.resume{display:block;margin-top:5px;width:68px;height:24px;background:#fff;border:1px solid #aaa;font:11.500px "Open Sans",sans-serif;color:#333;padding:0}
```
